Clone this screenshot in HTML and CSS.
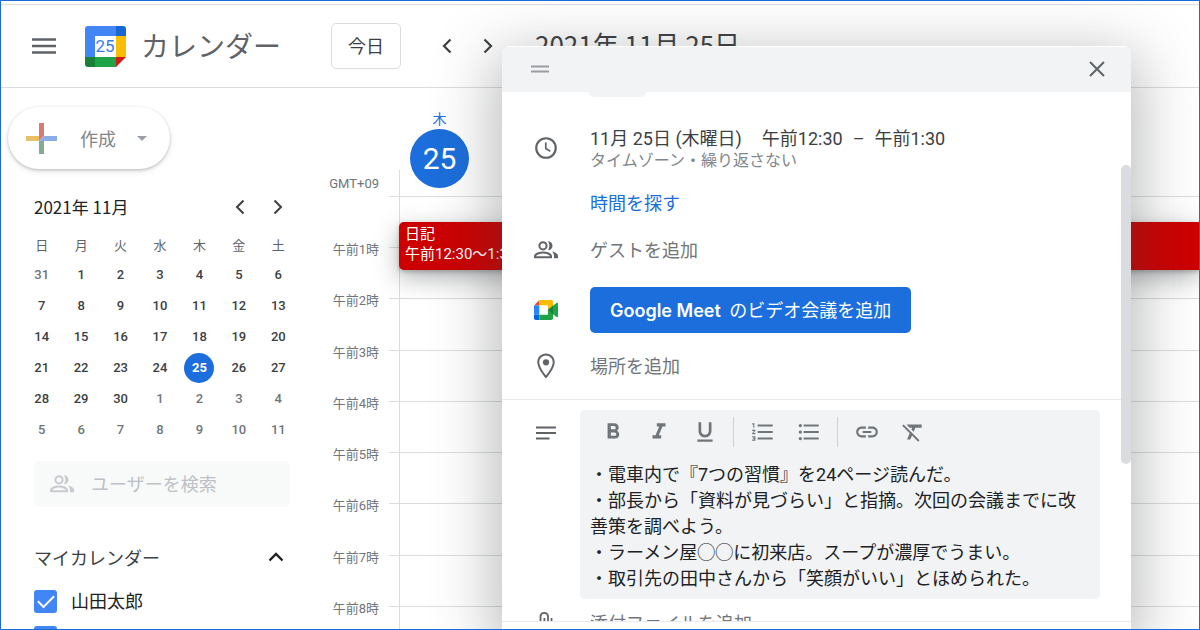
FILE: index.html
```html
<!DOCTYPE html>
<html lang="ja">
<head>
    <meta charset="UTF-8">
    <meta name="viewport" content="width=device-width, initial-scale=1.0">
    <title>カレンダー</title>
    <link rel="stylesheet" href="styles.css">
</head>
<body>
<div class="app">
    <header class="top-bar">
        <button type="button" class="icon-btn menu-btn" aria-label="メニュー">
            <svg width="24" height="18" viewBox="0 0 24 18"><path d="M0 2.500h24M0 9h24M0 15.500h24" stroke="#5f6368" stroke-width="2.600"/></svg>
        </button>
        <div class="brand">
            <svg width="41" height="41" viewBox="0 0 41 41">
                <path d="M3 0h28v10H10v21H0V3a3 3 0 0 1 3-3z" fill="#4285f4"/>
                <path d="M31 0h7a3 3 0 0 1 3 3v7H31z" fill="#1967d2"/>
                <path d="M31 10h10v21H31z" fill="#fbbc04"/>
                <path d="M10 31h21v10H10z" fill="#1ea446"/>
                <path d="M0 31h10v10H3a3 3 0 0 1-3-3z" fill="#188038"/>
                <path d="M31 31h10L31 41z" fill="#d01c12"/>
                <path d="M10 10h21v21H10z" fill="#fff"/>
                <text x="20" y="26" text-anchor="middle" class="logo-day">25</text>
            </svg>
            <span class="brand-name">カレンダー</span>
        </div>
        <button type="button" class="today-btn">今日</button>
        <div class="pager">
            <button type="button" class="icon-btn" aria-label="前の日">
                <svg width="14" height="16" viewBox="0 0 14 16"><path d="M10.500 1.500L4 8l6.500 6.500" fill="none" stroke="#3c4043" stroke-width="2.200"/></svg>
            </button>
            <button type="button" class="icon-btn" aria-label="次の日">
                <svg width="14" height="16" viewBox="0 0 14 16"><path d="M3.500 1.500L10 8l-6.500 6.500" fill="none" stroke="#3c4043" stroke-width="2.200"/></svg>
            </button>
        </div>
        <h1 class="current-date">2021年 11月 25日</h1>
    </header>

    <main class="main">
        <aside class="sidebar">
            <button type="button" class="create-btn">
                <svg width="31" height="31" viewBox="0 0 31 31">
                    <path d="M13 0h5v13l-5 5z" fill="#d97a78"/>
                    <path d="M0 13h13v5H0z" fill="#e8c064"/>
                    <path d="M18 13h13v5H13z" fill="#8caee6"/>
                    <path d="M13 18h5v13h-5z" fill="#84ab92"/>
                </svg>
                <span>作成</span>
                <svg width="10" height="5" viewBox="0 0 10 5"><path d="M0 0h10L5 5z" fill="#9aa0a6"/></svg>
            </button>

            <div class="month-head">
                <h2>2021年 11月</h2>
                <div class="month-nav">
                    <button type="button" class="icon-btn" aria-label="前の月">
                        <svg width="14" height="16" viewBox="0 0 14 16"><path d="M10.500 1.500L4 8l6.500 6.500" fill="none" stroke="#3c4043" stroke-width="2"/></svg>
                    </button>
                    <button type="button" class="icon-btn" aria-label="次の月">
                        <svg width="14" height="16" viewBox="0 0 14 16"><path d="M3.500 1.500L10 8l-6.500 6.500" fill="none" stroke="#3c4043" stroke-width="2"/></svg>
                    </button>
                </div>
            </div>
            <table class="month">
                <thead>
                    <tr><th>日</th><th>月</th><th>火</th><th>水</th><th>木</th><th>金</th><th>土</th></tr>
                </thead>
                <tbody>
                    <tr><td class="other">31</td><td>1</td><td>2</td><td>3</td><td>4</td><td>5</td><td>6</td></tr>
                    <tr><td>7</td><td>8</td><td>9</td><td>10</td><td>11</td><td>12</td><td>13</td></tr>
                    <tr><td>14</td><td>15</td><td>16</td><td>17</td><td>18</td><td>19</td><td>20</td></tr>
                    <tr><td>21</td><td>22</td><td>23</td><td>24</td><td><span class="selected">25</span></td><td>26</td><td>27</td></tr>
                    <tr><td>28</td><td>29</td><td>30</td><td class="other">1</td><td class="other">2</td><td class="other">3</td><td class="other">4</td></tr>
                    <tr><td class="other">5</td><td class="other">6</td><td class="other">7</td><td class="other">8</td><td class="other">9</td><td class="other">10</td><td class="other">11</td></tr>
                </tbody>
            </table>

            <label class="search">
                <svg width="24" height="18" viewBox="0 0 24 18" fill="none" stroke="#c8cbcf" stroke-width="2"><circle cx="9" cy="4.800" r="3.600"/><path d="M1 16.200v-1c0-2.200 4.600-3.800 8-3.800s8 1.600 8 3.800v1z"/><path d="M14 .3a4.500 4.500 0 0 1 0 9c1.800-2.600 1.800-6.400 0-9zM18 10.600c3 .7 6 2.200 6 4.400v2.200h-4v-2.400c0-1.700-.8-3.100-2-4.200z" fill="#c8cbcf" stroke="none"/></svg>
                <input type="text" placeholder="ユーザーを検索" aria-label="ユーザーを検索">
            </label>

            <div class="list-head">
                <h2>マイカレンダー</h2>
                <button type="button" class="icon-btn" aria-label="折りたたむ">
                    <svg width="16" height="10" viewBox="0 0 16 10"><path d="M1.500 8.500L8 2l6.500 6.500" fill="none" stroke="#202124" stroke-width="2.400"/></svg>
                </button>
            </div>
            <label class="cal-item"><input type="checkbox" checked><span>山田太郎</span></label>
            <label class="cal-item"><input type="checkbox" checked aria-label="誕生日"></label>
        </aside>

        <section class="day-view">
            <div class="day-head">
                <div class="tz">GMT+09</div>
                <div class="day-col">
                    <div class="stub"></div>
                    <div class="day">
                        <span class="weekday">木</span>
                        <span class="day-num">25</span>
                    </div>
                </div>
            </div>
            <div class="day-body">
                <div class="hours">
                    <span>午前1時</span><span>午前2時</span><span>午前3時</span><span>午前4時</span><span>午前5時</span><span>午前6時</span><span>午前7時</span><span>午前8時</span>
                </div>
                <div class="slots">
                    <div></div><div></div><div></div><div></div><div></div><div></div><div></div><div></div><div></div>
                    <div class="event">
                        <span>日記</span>
                        <span>午前12:30～1:30</span>
                    </div>
                </div>
            </div>
        </section>
    </main>

    <div class="dialog" role="dialog" aria-label="予定">
        <div class="dialog-head">
            <svg width="18" height="8" viewBox="0 0 18 8"><path d="M0 1.500h18M0 6.500h18" stroke="#9a9da1" stroke-width="2"/></svg>
            <button type="button" class="icon-btn" aria-label="閉じる">
                <svg width="16" height="16" viewBox="0 0 16 16"><path d="M1 1l14 14M15 1L1 15" stroke="#5f6368" stroke-width="2"/></svg>
            </button>
        </div>
        <div class="dialog-body">
            <div class="tab"></div>

            <div class="row time-row">
                <div class="row-icon">
                    <svg width="26" height="26" viewBox="0 0 24 24" fill="none" stroke="#5f6368" stroke-width="2"><circle cx="12" cy="12" r="9"/><path d="M11.800 7v5.400l4.200 2.500" stroke-width="1.600"/></svg>
                </div>
                <div>
                    <div class="when"><span>11月 25日 (木曜日)</span><span>午前12:30</span><span class="dash">–</span><span>午前1:30</span></div>
                    <div class="sub">タイムゾーン・繰り返さない</div>
                </div>
            </div>

            <div class="row find-row">
                <div class="row-icon"></div>
                <a href="#" class="find-link">時間を探す</a>
            </div>

            <div class="row guest-row">
                <div class="row-icon">
                    <svg width="24" height="18" viewBox="0 0 24 18" fill="none" stroke="#5f6368" stroke-width="2"><circle cx="9" cy="4.800" r="3.600"/><path d="M1 16.200v-1c0-2.200 4.600-3.800 8-3.800s8 1.600 8 3.800v1z"/><path d="M14 .3a4.500 4.500 0 0 1 0 9c1.800-2.600 1.800-6.400 0-9zM18 10.600c3 .7 6 2.200 6 4.400v2.200h-4v-2.400c0-1.700-.8-3.100-2-4.200z" fill="#5f6368" stroke="none"/></svg>
                </div>
                <input type="text" class="line-input" placeholder="ゲストを追加" aria-label="ゲストを追加">
            </div>

            <div class="row meet-row">
                <div class="row-icon">
                    <svg width="24" height="20" viewBox="0 0 24 20">
                        <path d="M0 5.500h5.500V0z" fill="#ea4335"/>
                        <path d="M0 5.500h5.500v9H0z" fill="#2684fc"/>
                        <path d="M0 14.500h5.500V20H1.800A1.800 1.800 0 0 1 0 18.200z" fill="#0066da"/>
                        <path d="M5.500 0H17.200A1.800 1.800 0 0 1 19 1.800V6l-5.200 4V5.500H5.500z" fill="#fbbc04"/>
                        <path d="M5.500 14.500h8.300V10L19 14v4.200a1.800 1.800 0 0 1-1.800 1.800H5.500z" fill="#1ea446"/>
                        <path d="M13.800 10L22.500 3c.6-.5 1.500-.1 1.500.7v12.600c0 .8-.9 1.200-1.500.7z" fill="#1ea446"/>
                        <path d="M13.800 10L19 5.800v8.400z" fill="#188038"/>
                        <path d="M5.500 5.500h8.300v9H5.500z" fill="#fff"/>
                    </svg>
                </div>
                <button type="button" class="meet-btn"><span class="meet-name">Google Meet</span> のビデオ会議を追加</button>
            </div>

            <div class="row place-row">
                <div class="row-icon">
                    <svg width="30" height="30" viewBox="0 0 24 24" fill="#5f6368"><path d="M12 2C8.130 2 5 5.130 5 9c0 5.250 7 13 7 13s7-7.750 7-13c0-3.870-3.130-7-7-7zM6.600 9c0-2.980 2.420-5.400 5.400-5.400s5.400 2.420 5.400 5.400c0 3.100-3.100 7.700-5.400 10.500C9.700 16.700 6.600 12.100 6.600 9z"/><circle cx="12" cy="9" r="2.500"/></svg>
                </div>
                <input type="text" class="line-input" placeholder="場所を追加" aria-label="場所を追加">
            </div>

            <div class="row editor-row">
                <div class="row-icon">
                    <svg width="20" height="14" viewBox="0 0 20 14"><path d="M0 1.500h20M0 7h20M0 12.500h13.500" stroke="#5f6368" stroke-width="2"/></svg>
                </div>
                <div class="editor">
                    <div class="toolbar">
                        <button type="button" class="tool" aria-label="太字">
                            <svg width="26" height="26" viewBox="0 0 24 24"><path d="M15.600 10.790c.97-.67 1.650-1.770 1.650-2.790 0-2.260-1.750-4-4-4H7v14h7.040c2.090 0 3.710-1.700 3.710-3.790 0-1.520-.86-2.820-2.150-3.420zM10 6.500h3c.83 0 1.500.67 1.500 1.500s-.67 1.500-1.500 1.500h-3v-3zm3.500 9H10v-3h3.500c.83 0 1.500.67 1.500 1.500s-.67 1.500-1.500 1.500z"/></svg>
                        </button>
                        <button type="button" class="tool" aria-label="斜体">
                            <svg width="26" height="26" viewBox="0 0 24 24"><path d="M10 4v3h2.210l-3.420 8H6v3h8v-3h-2.210l3.420-8H18V4z"/></svg>
                        </button>
                        <button type="button" class="tool" aria-label="下線">
                            <svg width="26" height="26" viewBox="0 0 24 24"><path d="M12 17c3.310 0 6-2.690 6-6V3h-2.500v8c0 1.930-1.570 3.500-3.500 3.500S8.500 12.930 8.500 11V3H6v8c0 3.310 2.690 6 6 6zm-7 2v2h14v-2H5z"/></svg>
                        </button>
                        <span class="sep"></span>
                        <button type="button" class="tool" aria-label="番号付きリスト">
                            <svg width="26" height="26" viewBox="0 0 24 24"><path d="M2 17h2v.5H3v1h1v.5H2v1h3v-4H2v1zm1-9h1V4H2v1h1v3zm-1 3h1.800L2 13.100v.9h3v-1H3.200L5 10.900V10H2v1zm5-6v2h14V5H7zm0 14h14v-2H7v2zm0-6h14v-2H7v2z"/></svg>
                        </button>
                        <button type="button" class="tool" aria-label="箇条書き">
                            <svg width="26" height="26" viewBox="0 0 24 24"><path d="M7 5h14v2H7zm0 6h14v2H7zm0 6h14v2H7z"/><circle cx="4" cy="6" r="1.500"/><circle cx="4" cy="12" r="1.500"/><circle cx="4" cy="18" r="1.500"/></svg>
                        </button>
                        <span class="sep"></span>
                        <button type="button" class="tool" aria-label="リンク">
                            <svg width="26" height="26" viewBox="0 0 24 24"><path d="M3.900 12c0-1.710 1.390-3.100 3.100-3.100h4V7H7c-2.760 0-5 2.240-5 5s2.240 5 5 5h4v-1.900H7c-1.710 0-3.100-1.390-3.100-3.100zM8 13h8v-2H8v2zm9-6h-4v1.900h4c1.710 0 3.100 1.390 3.100 3.100s-1.390 3.100-3.100 3.100h-4V17h4c2.760 0 5-2.240 5-5s-2.240-5-5-5z"/></svg>
                        </button>
                        <button type="button" class="tool" aria-label="書式をクリア">
                            <svg width="26" height="26" viewBox="0 0 24 24"><path d="M3.270 5L2 6.270l6.970 6.970L6.500 19h3l1.570-3.660L16.730 21 18 19.730 3.550 5.270 3.270 5zM6 5v.18L8.820 8h2.400l-.72 1.680 2.100 2.100L14.210 8H20V5H6z"/></svg>
                        </button>
                    </div>
                    <textarea rows="5" aria-label="説明">・電車内で『7つの習慣』を24ページ読んだ。
・部長から「資料が見づらい」と指摘。次回の会議までに改善策を調べよう。
・ラーメン屋◯◯に初来店。スープが濃厚でうまい。
・取引先の田中さんから「笑顔がいい」とほめられた。</textarea>
                </div>
            </div>

            <div class="row attach-row">
                <div class="row-icon">
                    <svg width="14" height="26" viewBox="0 0 14 26" fill="none" stroke="#5f6368" stroke-width="1.800"><path d="M12.500 7v12a5 5 0 0 1-11 0V5a3.800 3.800 0 0 1 7.500 0v13a1.800 1.800 0 0 1-3.600 0V7"/></svg>
                </div>
                <span>添付ファイルを追加</span>
            </div>
        </div>
        <div class="dialog-foot"></div>
        <div class="scroll-thumb"></div>
    </div>
</div>
</body>
</html>
```
FILE: styles.css
```css
* {
    box-sizing: border-box;
}
body {
    margin: 0;
    background: #fff;
    color: #3c4043;
    font-family: Roboto, "Noto Sans CJK JP", sans-serif;
    font-size: 18px;
}
button, input, textarea {
    font-family: inherit;
    font-size: inherit;
    color: inherit;
}
svg {
    display: block;
    flex: none;
}
h1, h2 {
    margin: 0;
    font-weight: 400;
}
.app {
    position: relative;
    display: flex;
    flex-direction: column;
    height: 100vh;
    padding-top: 3px;
    border: 1px solid #1b6bdb;
    overflow: hidden;
}
.icon-btn {
    display: flex;
    align-items: center;
    justify-content: center;
    width: 32px;
    height: 32px;
    padding: 0;
    border: none;
    background: none;
}

/* top bar */
.top-bar {
    display: flex;
    flex: none;
    align-items: center;
    height: 84px;
    padding-left: 27px;
    border-top: 1px solid #dadce0;
    border-bottom: 1px solid #dadce0;
    white-space: nowrap;
}
.brand {
    display: flex;
    align-items: center;
    gap: 15px;
    width: 246px;
    margin-left: 25px;
}
.brand-name {
    padding-bottom: 2px;
    font-size: 28px;
    color: #5f6368;
}
.logo-day {
    font-size: 17px;
    fill: #3b7de8;
}
.today-btn {
    width: 70px;
    height: 46px;
    padding: 0 0 2px;
    border: 1px solid #dadce0;
    border-radius: 5px;
    background: #fff;
}
.pager {
    display: flex;
    gap: 9px;
    margin-left: 30px;
}
.current-date {
    margin-left: 31px;
    padding-bottom: 6px;
    font-family: "Noto Sans CJK JP", sans-serif;
    font-size: 26px;
}

/* sidebar */
.main {
    display: flex;
    flex: 1;
    min-height: 0;
}
.sidebar {
    flex: none;
    width: 319px;
    padding: 19px 0 0 33px;
}
.create-btn {
    display: flex;
    align-items: center;
    width: 162px;
    height: 62px;
    margin-left: -26px;
    padding: 0 0 0 18px;
    border: none;
    border-radius: 31px;
    background: #fff;
    color: #80868b;
    box-shadow: 0 1px 3px rgba(60, 64, 67, .3), 0 3px 6px rgba(60, 64, 67, .1);
}
.create-btn span {
    margin: 0 21px 0 23px;
}
.month-head, .list-head {
    display: flex;
    align-items: center;
    justify-content: space-between;
    width: 260px;
    height: 32px;
}
.month-head {
    margin-top: 22px;
}
.month-head h2 {
    padding-bottom: 2px;
    font-family: "Noto Sans CJK JP", sans-serif;
    font-size: 17px;
    color: #202124;
}
.month-nav {
    display: flex;
    gap: 6px;
}
.month {
    width: 276px;
    margin: 6px 0 0 -12px;
    border-collapse: collapse;
    table-layout: fixed;
    font-size: 13px;
    font-weight: 500;
    text-align: center;
}
.month th, .month td {
    height: 31px;
    padding: 0;
}
.month th {
    height: 30px;
    font-weight: 400;
    color: #5f6368;
}
.month .other {
    color: #70757a;
}
.selected {
    display: block;
    width: 30px;
    height: 30px;
    margin: 0 auto;
    border-radius: 50%;
    background: #1b6edb;
    color: #fff;
    line-height: 30px;
    font-weight: 700;
}
.search {
    display: flex;
    align-items: center;
    gap: 17px;
    width: 256px;
    height: 46px;
    margin-top: 16px;
    padding-left: 16px;
    border-radius: 5px;
    background: #f8faf9;
}
.search input {
    width: 180px;
    padding: 0;
    border: none;
    background: none;
}
.search input::placeholder {
    color: #bdc1c6;
}
.list-head {
    width: 258px;
    margin: 34px 0 10px;
}
.list-head h2 {
    font-size: 18px;
}
.cal-item {
    display: flex;
    align-items: center;
    gap: 14px;
    height: 36px;
}
.cal-item input {
    appearance: none;
    display: grid;
    place-items: center;
    width: 23px;
    height: 23px;
    margin: 0;
    border-radius: 3px;
    background: #4285f4;
}
.cal-item input::before {
    content: "";
    width: 14px;
    height: 7px;
    border: solid #fff;
    border-width: 0 0 2px 2px;
    transform: translateY(-2px) rotate(-45deg);
}
.cal-item span {
    padding-bottom: 2px;
    color: #202124;
}

/* day view */
.day-view {
    flex: 1;
    min-width: 0;
}
.day-head {
    display: flex;
    height: 109px;
}
.tz {
    width: 69px;
    padding: 88px 10px 0 0;
    font-size: 13px;
    line-height: 16px;
    text-align: right;
    color: #70757a;
}
.day-col {
    display: flex;
    flex: 1;
    border-bottom: 1px solid #dadce0;
}
.stub {
    align-self: flex-end;
    width: 11px;
    height: 26px;
    border-right: 1px solid #dadce0;
}
.day {
    display: flex;
    flex-direction: column;
    align-items: center;
    margin-left: 10px;
    padding-top: 21px;
    color: #1b6edb;
}
.weekday {
    font-size: 14px;
    line-height: 20px;
}
.day-num {
    width: 59px;
    height: 59px;
    border-radius: 50%;
    background: #1b6edb;
    color: #fff;
    font-size: 30px;
    line-height: 59px;
    text-align: center;
}
.day-body {
    display: flex;
}
.hours {
    display: grid;
    grid-template-rows: repeat(8, 1fr);
    align-items: center;
    width: 69px;
    height: 410px;
    margin-top: 26px;
    padding-right: 10px;
    font-size: 13px;
    text-align: right;
    color: #70757a;
}
.slots {
    position: relative;
    display: grid;
    grid-template-rows: repeat(9, 1fr);
    flex: 1;
    height: 461px;
}
.slots > div {
    border-bottom: 1px solid #dadce0;
}
.slots::before {
    content: "";
    position: absolute;
    top: 0;
    bottom: 0;
    left: 10px;
    border-left: 1px solid #dadce0;
}
.slots > .event {
    position: absolute;
    top: 25px;
    left: 10px;
    right: 0;
    display: flex;
    flex-direction: column;
    height: 48px;
    padding: 2px 6px;
    border: none;
    border-radius: 5px 0 0 5px;
    background: #c00;
    color: #fff;
    font-size: 15px;
    line-height: 20px;
    box-shadow: 0 2px 4px rgba(60, 64, 67, .3), 0 8px 24px rgba(60, 64, 67, .4);
}

/* event dialog */
.dialog {
    position: absolute;
    top: 45px;
    right: 68px;
    bottom: 0;
    left: 501px;
    display: flex;
    flex-direction: column;
    border-radius: 8px 8px 0 0;
    background: #fff;
    box-shadow: 0 16px 60px 8px rgba(60, 64, 67, .36);
    overflow: hidden;
}
.dialog-head {
    display: flex;
    flex: none;
    align-items: center;
    justify-content: space-between;
    height: 46px;
    padding: 0 18px 0 29px;
    background: #f1f3f4;
    box-shadow: inset 0 1px #fff;
}
.dialog-body {
    flex: 1;
    min-height: 0;
    overflow: hidden;
}
.tab {
    width: 57px;
    height: 5px;
    margin-left: 87px;
    border-radius: 0 0 5px 5px;
    background: #f1f3f4;
}
.row {
    display: flex;
    align-items: center;
    line-height: 26px;
}
.row-icon {
    display: flex;
    flex: none;
    justify-content: center;
    width: 88px;
}
.time-row {
    margin-top: 29px;
}
.when {
    display: flex;
    gap: 10px;
}
.when span:first-child {
    margin-right: 10px;
}
.sub {
    font-size: 16px;
    line-height: 18px;
    color: #80868b;
}
.find-row {
    margin-top: 21px;
}
.find-link {
    color: #1b6edb;
    text-decoration: none;
}
.guest-row {
    height: 26px;
    margin-top: 20px;
}
.line-input {
    flex: 1;
    height: 26px;
    padding: 0;
    border: none;
    background: none;
}
.line-input::placeholder {
    color: #70757a;
}
.meet-row {
    margin-top: 24px;
}
.meet-btn {
    height: 46px;
    padding: 0 20px 2px;
    border: none;
    border-radius: 5px;
    background: #1b6edb;
    color: #fff;
}
.meet-name {
    margin-right: 4px;
    font-family: Inter, sans-serif;
    font-weight: 600;
}
.place-row {
    height: 26px;
    margin-top: 20px;
}
.editor-row {
    align-items: flex-start;
    margin-top: 20px;
    padding-top: 10px;
    border-top: 1px solid #e8eaed;
}
.editor-row .row-icon {
    width: 78px;
    padding: 16px 0 0 10px;
}
.editor {
    flex: 1;
    margin-right: 31px;
    padding: 0 10px 7px;
    border-radius: 5px;
    background: #f1f3f4;
}
.toolbar {
    display: flex;
    align-items: center;
    height: 44px;
}
.tool {
    display: flex;
    justify-content: center;
    width: 46px;
    padding: 0;
    border: none;
    background: none;
    fill: #70757a;
}
.sep {
    width: 1px;
    height: 30px;
    margin: 0 6px 0 5px;
    background: #d0d3d6;
}
.editor textarea {
    display: block;
    width: 100%;
    height: 130px;
    margin-top: 8px;
    padding: 0;
    border: none;
    background: none;
    color: #202124;
    line-height: 26px;
    resize: none;
    overflow: hidden;
}
.attach-row {
    margin-top: 12px;
    color: #70757a;
}
.dialog-foot {
    flex: none;
    height: 8px;
    border-top: 1px solid #e8eaed;
}
.scroll-thumb {
    position: absolute;
    top: 119px;
    right: 0;
    width: 10px;
    height: 299px;
    border-radius: 5px;
    background: #dadce0;
}
```
